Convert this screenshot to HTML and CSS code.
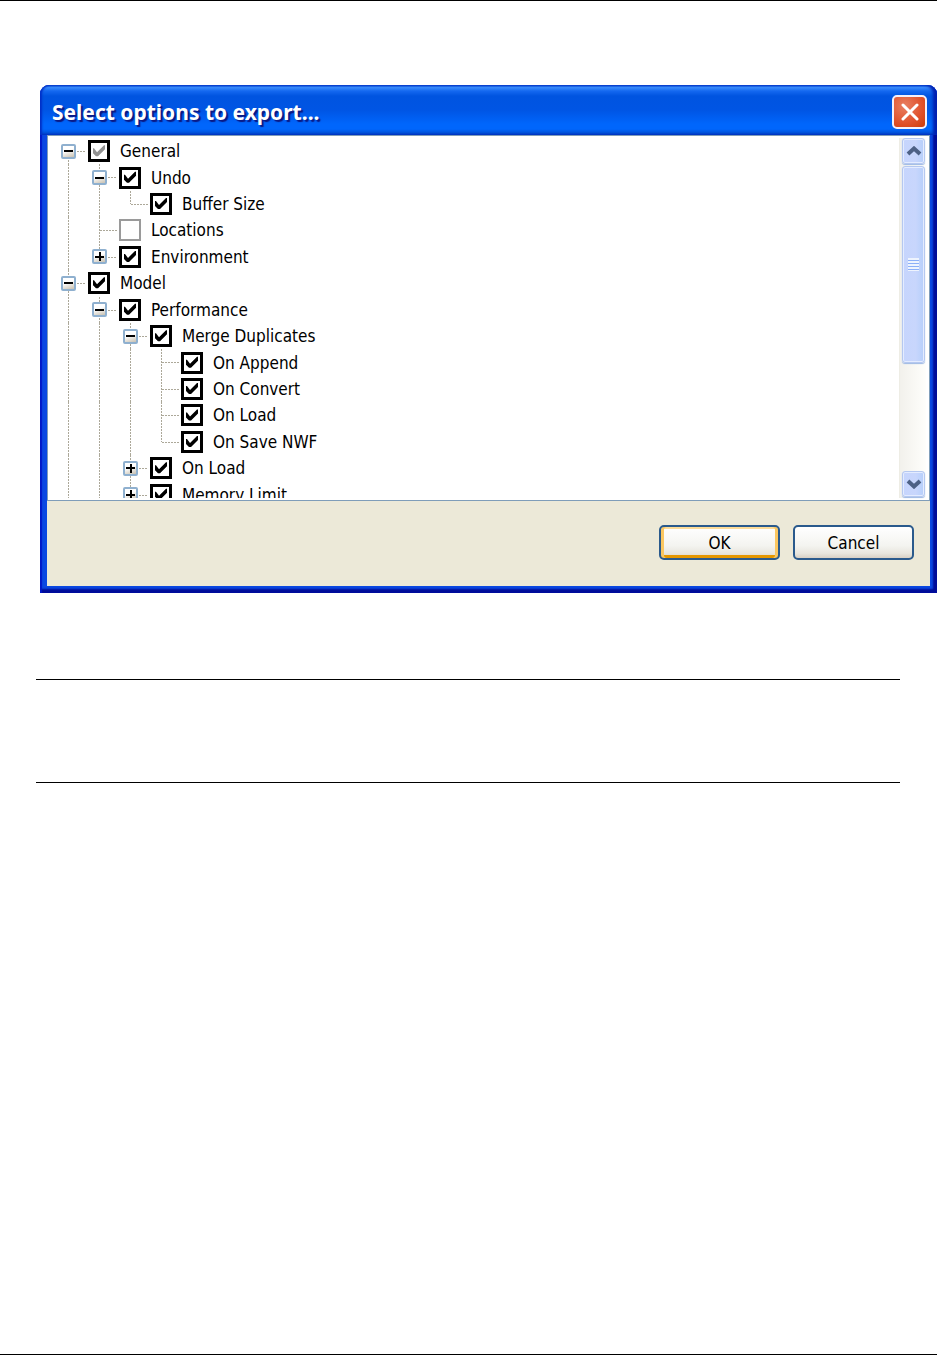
FILE: index.html
```
<!DOCTYPE html>
<html lang="en">
<head>
  <meta charset="UTF-8">
  <meta name="viewport" content="width=device-width, initial-scale=1.0">
  <title>Select options to export</title>
  <link rel="stylesheet" href="styles.css">
</head>
<body>
  <main class="page">
    <section class="dialog" role="dialog" aria-labelledby="dialog-title">
      <header class="titlebar">
        <h1 id="dialog-title">Select options to export...</h1>
        <button class="close" type="button" aria-label="Close">
          <svg viewBox="0 0 18 18" width="18" height="18"><path d="M2 2L16 16M16 2L2 16"/></svg>
        </button>
      </header>
      <div class="options">
        <div class="viewport">
        <ul class="tree">
          <li>
            <span class="cell down"><button class="toggle open" type="button" aria-label="Collapse"></button></span>
            <label><input type="checkbox" class="partial" checked>General</label>
          </li>
          <li>
            <span class="cell line"></span>
            <span class="cell line"><button class="toggle open" type="button" aria-label="Collapse"></button></span>
            <label><input type="checkbox" checked>Undo</label>
          </li>
          <li>
            <span class="cell line"></span>
            <span class="cell line"></span>
            <span class="cell up branch"></span>
            <label><input type="checkbox" checked>Buffer Size</label>
          </li>
          <li>
            <span class="cell line"></span>
            <span class="cell line branch"></span>
            <label><input type="checkbox">Locations</label>
          </li>
          <li>
            <span class="cell line"></span>
            <span class="cell up"><button class="toggle" type="button" aria-label="Expand"></button></span>
            <label><input type="checkbox" checked>Environment</label>
          </li>
          <li>
            <span class="cell line"><button class="toggle open" type="button" aria-label="Collapse"></button></span>
            <label><input type="checkbox" checked>Model</label>
          </li>
          <li>
            <span class="cell line"></span>
            <span class="cell line"><button class="toggle open" type="button" aria-label="Collapse"></button></span>
            <label><input type="checkbox" checked>Performance</label>
          </li>
          <li>
            <span class="cell line"></span>
            <span class="cell line"></span>
            <span class="cell line"><button class="toggle open" type="button" aria-label="Collapse"></button></span>
            <label><input type="checkbox" checked>Merge Duplicates</label>
          </li>
          <li>
            <span class="cell line"></span>
            <span class="cell line"></span>
            <span class="cell line"></span>
            <span class="cell line branch"></span>
            <label><input type="checkbox" checked>On Append</label>
          </li>
          <li>
            <span class="cell line"></span>
            <span class="cell line"></span>
            <span class="cell line"></span>
            <span class="cell line branch"></span>
            <label><input type="checkbox" checked>On Convert</label>
          </li>
          <li>
            <span class="cell line"></span>
            <span class="cell line"></span>
            <span class="cell line"></span>
            <span class="cell line branch"></span>
            <label><input type="checkbox" checked>On Load</label>
          </li>
          <li>
            <span class="cell line"></span>
            <span class="cell line"></span>
            <span class="cell line"></span>
            <span class="cell up branch"></span>
            <label><input type="checkbox" checked>On Save NWF</label>
          </li>
          <li>
            <span class="cell line"></span>
            <span class="cell line"></span>
            <span class="cell line"><button class="toggle" type="button" aria-label="Expand"></button></span>
            <label><input type="checkbox" checked>On Load</label>
          </li>
          <li>
            <span class="cell line"></span>
            <span class="cell line"></span>
            <span class="cell line"><button class="toggle" type="button" aria-label="Expand"></button></span>
            <label><input type="checkbox" checked>Memory Limit</label>
          </li>
        </ul>
        </div>
        <div class="scrollbar">
          <button class="arrow" type="button" aria-label="Scroll up">
            <svg viewBox="0 0 16 10" width="16" height="10"><path d="M2 8L8 2.500L14 8"/></svg>
          </button>
          <div class="thumb"><span class="grip"></span></div>
          <button class="arrow last" type="button" aria-label="Scroll down">
            <svg viewBox="0 0 16 10" width="16" height="10"><path d="M2 2L8 7.500L14 2"/></svg>
          </button>
        </div>
      </div>
      <footer class="actions">
        <button class="btn default" type="button">OK</button>
        <button class="btn" type="button">Cancel</button>
      </footer>
    </section>
    <hr class="rule">
    <hr class="rule">
  </main>
</body>
</html>
```

FILE: styles.css
```
* {
  box-sizing: border-box;
}

body {
  margin: 0;
  background: white;
  color: black;
  font: 17px/24px "DejaVu Sans Condensed", "DejaVu Sans", sans-serif;
}

button {
  padding: 0;
  font: inherit;
}

.page {
  display: flow-root;
  min-height: 100vh;
  border-top: 1px solid black;
  border-bottom: 1px solid black;
}

/* window frame */
.dialog {
  margin: 84px 0 86px 40px;
  padding: 0 7px 7px;
  border-radius: 9px 9px 0 0;
  background: #0a48e2;
  box-shadow: inset 2px 0 1px #0018c8, inset -4px -4px 2px #000c98;
}

.titlebar {
  display: flex;
  align-items: center;
  justify-content: space-between;
  height: 50px;
  margin: 0 -7px;
  padding: 4px 10px 0 12px;
  border-radius: 9px 9px 0 0;
  background: linear-gradient(#0a55dc, #3a8cfc 5%, #1468f0 12%, #0054e0 22%, #0055e4 50%, #0066fc 78%, #0066fc 88%, #0046c8);
  box-shadow: inset 2px 0 2px #0030c8, inset -4px 0 3px #0020b0;
}
.titlebar h1 {
  margin: 0;
  color: white;
  font: bold 21px/28px "Noto Sans", sans-serif;
  text-shadow: 2px 2px 1px #0a1883;
}

.close {
  display: grid;
  place-items: center;
  width: 35px;
  height: 34px;
  border: 2px solid #f4f0fa;
  border-radius: 5px;
  background: radial-gradient(circle at 35% 30%, #e88062, #e0512c 60%, #cc3c08);
}
.close path {
  fill: none;
  stroke: white;
  stroke-width: 3;
  stroke-linecap: round;
}

/* tree list */
.options {
  display: flex;
  height: 366px;
  padding: 2px 3px 2px 1px;
  border: 1px solid #7f9db9;
  background: white;
}

.viewport {
  flex: 1;
  overflow: hidden;
}

.tree {
  display: grid;
  grid-template-rows: repeat(14, 1fr);
  height: 370px;
  margin: 0;
  padding: 0 0 0 4px;
  list-style: none;
}
.tree li {
  display: flex;
  align-items: center;
}
.tree label {
  display: flex;
  align-items: center;
  gap: 10px;
  margin-left: 4px;
  white-space: nowrap;
}

.cell {
  display: grid;
  position: relative;
  place-items: center;
  align-self: stretch;
  width: 31px;
}
.line,
.up,
.down {
  background: repeating-linear-gradient(#aca899 0 2px, transparent 2px 3px) 15px 0 / 1px 100% no-repeat;
}
.up {
  background-size: 1px 50%;
}
.down {
  background-position: 15px 100%;
  background-size: 1px 50%;
}
.branch::after,
.cell:has(.toggle)::after {
  content: "";
  position: absolute;
  top: 13px;
  right: -2px;
  width: 17px;
  height: 1px;
  background: repeating-linear-gradient(90deg, #aca899 0 2px, transparent 2px 3px);
}
.cell:has(.toggle)::after {
  width: 9px;
}

.toggle {
  width: 15px;
  height: 15px;
  border: 2px solid #8fb0cf;
  border-radius: 2px;
  background:
    linear-gradient(black, black) center / 9px 2px no-repeat,
    linear-gradient(black, black) center / 2px 9px no-repeat,
    linear-gradient(160deg, white 40%, #c8c0b0);
}
.toggle.open {
  background:
    linear-gradient(black, black) center / 9px 2px no-repeat,
    linear-gradient(160deg, white 40%, #c8c0b0);
}

input[type=checkbox] {
  appearance: none;
  width: 22px;
  height: 22px;
  margin: 0;
  border: 2px solid #9a9a9a;
  background: white;
}
input[type=checkbox]:checked {
  border: 3px solid black;
}
input[type=checkbox]:checked::before {
  content: "";
  display: block;
  width: 16px;
  height: 16px;
  background: black;
  clip-path: polygon(2px 5px, 3px 5px, 6px 9px, 13px 2px, 14px 2px, 14px 6px, 7px 13px, 5px 13px, 2px 10px);
}
input.partial:checked::before {
  background: #929292;
}

.scrollbar {
  display: flex;
  flex-direction: column;
  gap: 2px;
  width: 27px;
  padding: 0 1px 1px 2px;
  border-left: 1px solid #eeede5;
  background: linear-gradient(90deg, #f2f1ec, #fefefb);
}
.arrow,
.thumb {
  display: grid;
  place-items: center;
  width: 23px;
  border: 1px solid #b5c8f0;
  border-radius: 3px;
  background: linear-gradient(90deg, #c6d5fd, #c8d6fc 60%, #b6cffb);
  box-shadow: inset 0 0 0 1px #e4ecff, 0 1px 1px #9db8e4;
}
.arrow {
  height: 26px;
}
.arrow.last {
  margin-top: auto;
}
.arrow path {
  fill: none;
  stroke: #4d6185;
  stroke-width: 4;
}
.thumb {
  height: 197px;
}
.grip {
  width: 11px;
  height: 13px;
  background: repeating-linear-gradient(#eef4fe 0 2px, #8cb0f8 2px 3px);
}

/* buttons */
.actions {
  display: flex;
  justify-content: flex-end;
  gap: 13px;
  height: 85px;
  padding: 24px 16px;
  background: #ece9d8;
}
.btn {
  width: 121px;
  height: 35px;
  border: 2px solid #2a5a8c;
  border-radius: 5px;
  background: linear-gradient(white, #f4f4f0 60%, #e8e6de 85%, #d8d0c4);
  color: black;
}
.btn.default {
  box-shadow: inset 3px 0 #fbc761, inset -3px 0 #fbc761, inset 0 2px #fddc98, inset 0 -3px #e59700;
}

.rule {
  height: 1px;
  margin: 0 37px 102px 36px;
  border: 0;
  background: black;
}
```
